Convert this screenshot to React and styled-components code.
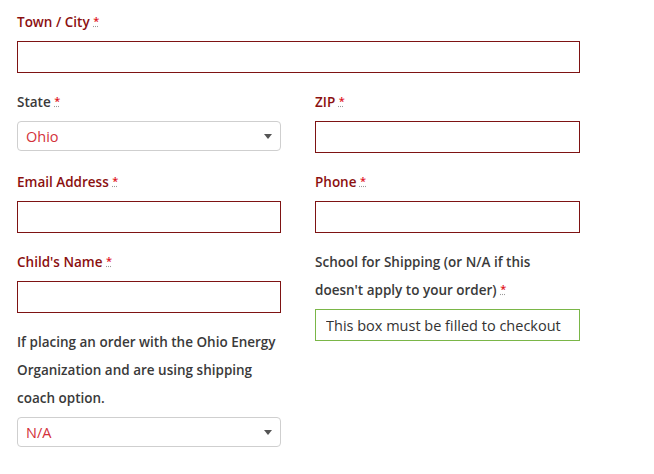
import React from "react"
import styled, { createGlobalStyle } from "styled-components"

const GlobalStyle = createGlobalStyle`
  body {
    margin: 0;
    background: #fff;
    font-family: "Open Sans", Lato, sans-serif;
  }
`

const Form = styled.form`
  padding: 8px 17px;
  width: 563px;
  display: grid;
  grid-template-columns: 264px 265px;
  column-gap: 34px;
  align-items: start;
`

const Field = styled.div`
  display: flex;
  flex-direction: column;
  margin-bottom: 15px;
`

const Label = styled.label`
  display: block;
  font-size: 13.5px;
  font-weight: 600;
  line-height: 28px;
  margin-bottom: 5px;
  color: ${(p) => (p.$invalid ? "#8b1010" : "#3a3a3a")};
`

const Req = styled.abbr`
  position: relative;
  top: -2px;
  line-height: 1;
  color: #e0141e;
  text-decoration: underline dotted #999;
  font-size: 11px;
`

const Note = styled.p`
  margin: 0 0 5px;
  font-size: 13.5px;
  font-weight: 600;
  line-height: 28px;
  color: #3a3a3a;
`

const Input = styled.input`
  box-sizing: border-box;
  display: block;
  width: 100%;
  height: 32px;
  margin: 0;
  padding: 0 10px;
  font-family: inherit;
  font-size: 14.5px;
  color: #333;
  background: #fff;
  border: 1px solid ${(p) => (p.$valid ? "#7ab648" : "#7e1313")};
  border-radius: 0;
  outline: none;
  &::placeholder {
    color: #333;
    opacity: 1;
  }
`

const SelectBox = styled.div`
  box-sizing: border-box;
  height: 30px;
  border: 1px solid #cfcfcf;
  border-radius: 4px;
  display: flex;
  align-items: center;
  justify-content: space-between;
  padding: 0 8px;
  font-size: 14.5px;
  color: #d3313a;
  background: #fff;
`

const Arrow = styled.span`
  width: 0;
  height: 0;
  border-left: 4px solid transparent;
  border-right: 4px solid transparent;
  border-top: 5px solid #555;
`

const Wide = styled(Field)`
  grid-column: 1 / span 2;
`

const Column = styled.div`
  display: flex;
  flex-direction: column;
`

function Select({ value }) {
  return (
    <SelectBox>
      <span>{value}</span>
      <Arrow />
    </SelectBox>
  )
}

function Required() {
  return <Req title="required">*</Req>
}

export default function App() {
  return (
    <>
      <GlobalStyle />
      <Form>
        <Wide>
          <Label $invalid>
            Town / City <Required />
          </Label>
          <Input />
        </Wide>
        <Field>
          <Label>
            State <Required />
          </Label>
          <Select value="Ohio" />
        </Field>
        <Field>
          <Label $invalid>
            ZIP <Required />
          </Label>
          <Input />
        </Field>
        <Field>
          <Label $invalid>
            Email Address <Required />
          </Label>
          <Input />
        </Field>
        <Field>
          <Label $invalid>
            Phone <Required />
          </Label>
          <Input />
        </Field>
        <Column>
          <Field>
            <Label $invalid>
              Child's Name <Required />
            </Label>
            <Input />
          </Field>
          <Field>
            <Note>
              If placing an order with the Ohio Energy Organization and are
              using shipping coach option.
            </Note>
            <Select value="N/A" />
          </Field>
        </Column>
        <Field>
          <Label>
            School for Shipping (or N/A if this doesn't apply to your order){" "}
            <Required />
          </Label>
          <Input $valid placeholder="This box must be filled to checkout" />
        </Field>
      </Form>
    </>
  )
}
